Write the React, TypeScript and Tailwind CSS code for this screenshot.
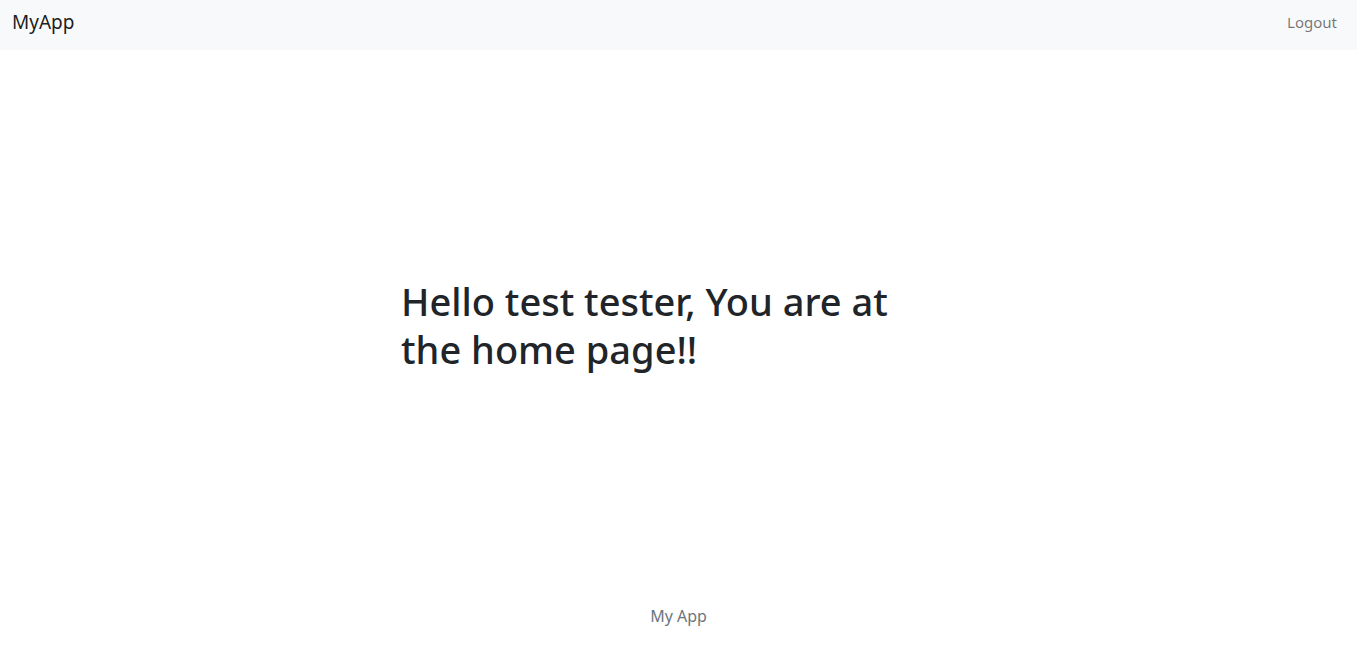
export default function App() {
  return (
    <div className="flex h-screen flex-col bg-white font-['Noto_Sans',_'Open_Sans',_sans-serif] text-[#212529]">
      {/* Navbar */}
      <nav className="flex h-[50px] items-center justify-between bg-[#f8f9fa] pb-[6px] pl-3 pr-5">
        <a href="#" className="text-[19px] leading-[30px] text-black/90">MyApp</a>
        <a href="#" className="text-[15px] text-black/55">Logout</a>
      </nav>

      {/* Main */}
      <main className="flex flex-1 items-center justify-center pb-1">
        <div className="w-[555px]">
          <h1 className="max-w-[530px] text-[38px] font-medium leading-[48px]">
            Hello test tester, You are at the home page!!
          </h1>
        </div>
      </main>

      {/* Footer */}
      <footer className="pb-[19px] text-center text-[16px] leading-6 text-[#6c757d]">My App</footer>
    </div>
  );
}
